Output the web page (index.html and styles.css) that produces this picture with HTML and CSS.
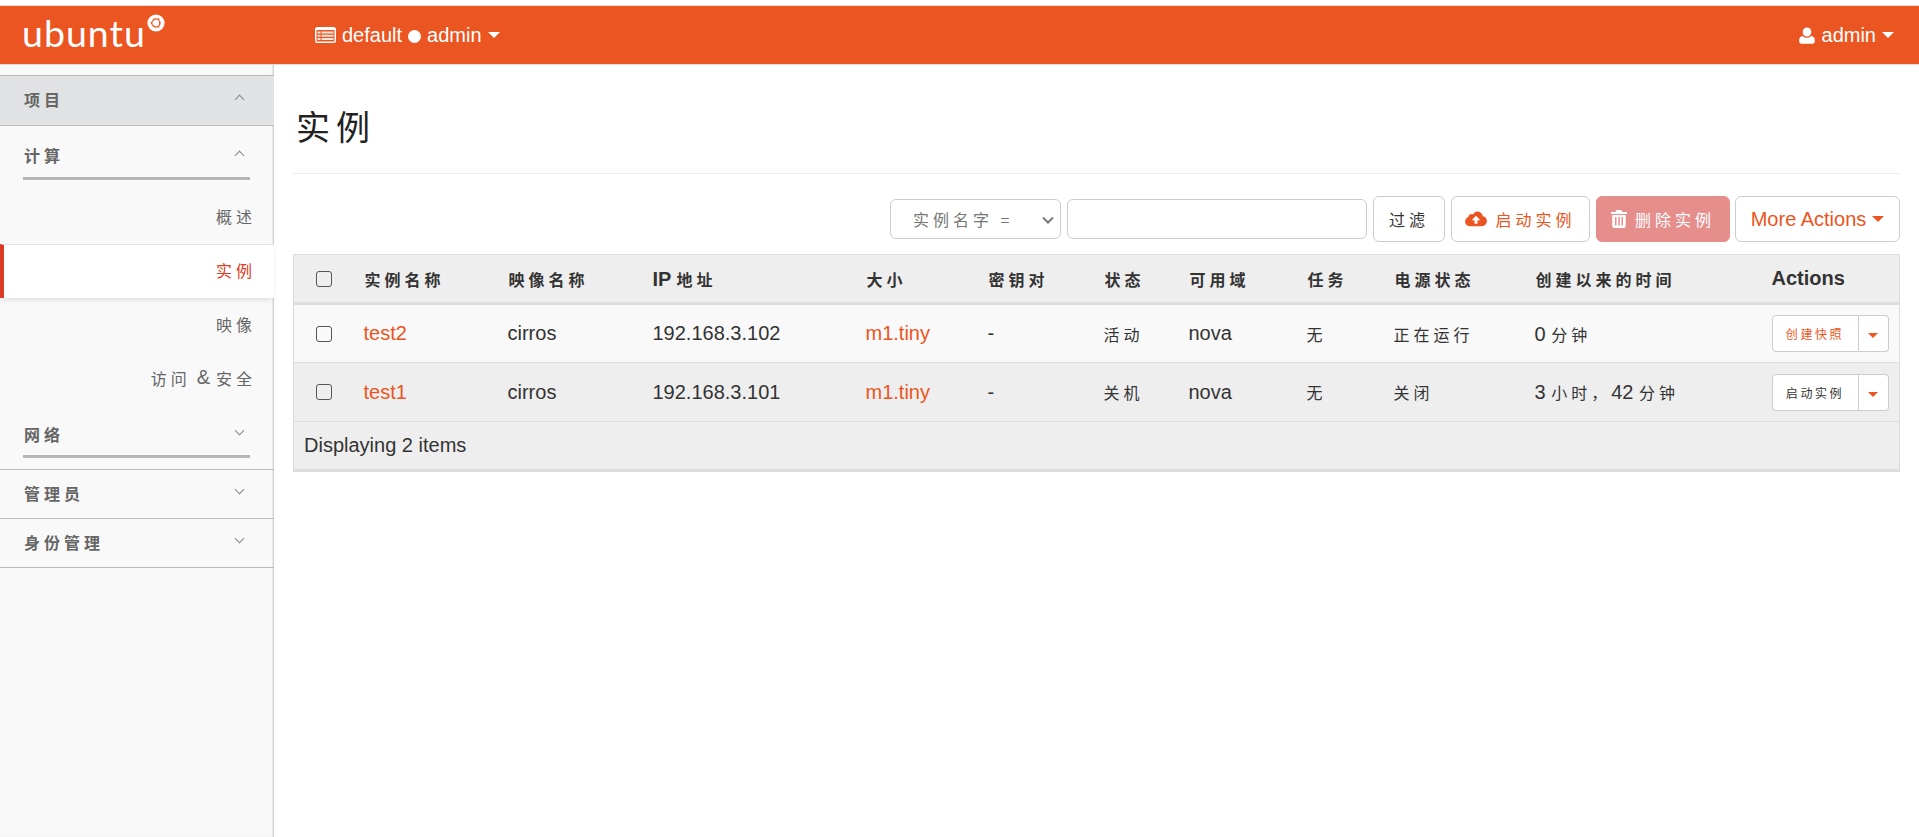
FILE: index.html
```html
<!DOCTYPE html>
<html lang="zh">
<head>
<meta charset="utf-8">
<title>实例</title>
<link rel="stylesheet" href="styles.css">
</head>
<body>
<header class="navbar">
  <a class="brand"><span class="brand-word">ubuntu</span><svg class="brand-mark" viewBox="0 0 18 18" width="18" height="18"><circle cx="9" cy="9" r="8.6" fill="#fff"/><circle cx="9" cy="9" r="3.9" fill="none" stroke="#eb5521" stroke-width="1.5"/><circle cx="4.7" cy="9" r="1.4" fill="#eb5521" stroke="#fff" stroke-width=".6"/><circle cx="11.2" cy="5.3" r="1.4" fill="#eb5521" stroke="#fff" stroke-width=".6"/><circle cx="11.2" cy="12.7" r="1.4" fill="#eb5521" stroke="#fff" stroke-width=".6"/></svg></a>
  <div class="nav-project">
    <svg class="nav-icon" viewBox="0 0 21 16" width="21" height="16"><rect width="21" height="16" rx="2.5" fill="#fff"/><rect x="1.5" y="3" width="18" height="11.5" fill="#eb5521"/><path d="M2.5 4.5h3v2h-3zM6.5 4.5h12v2h-12zM2.5 7.7h3v2h-3zM6.5 7.7h12v2h-12zM2.5 10.9h3v2h-3zM6.5 10.9h12v2h-12z" fill="#fff" opacity=".85"/></svg>
    <span>default</span><span class="nav-dot"></span><span>admin</span><span class="caret caret-white"></span>
  </div>
  <div class="nav-user">
    <svg class="nav-icon" viewBox="0 0 16 17" width="16" height="17"><path d="M8 .5a4.3 4.3 0 0 1 4.3 4.6A4.3 4.3 0 0 1 8 9.6a4.3 4.3 0 0 1-4.3-4.5A4.3 4.3 0 0 1 8 .5zM3.600 8.900C4.700 10 6.200 10.700 8 10.700s3.300-.7 4.400-1.800c2.300.3 3.500 2.100 3.500 5.100 0 1.700-1.100 2.800-2.700 2.800H2.800C1.200 16.800.1 15.700.1 14c0-3 1.200-4.800 3.500-5.100z" fill="#fff"/></svg>
    <span>admin</span><span class="caret caret-white"></span>
  </div>
</header>

<div class="shell">
  <nav class="sidebar">
    <div class="dash-head"><span class="zh">项目</span><span class="chev chev-up"></span></div>

    <div class="group">
      <div class="group-head"><span class="zh">计算</span><span class="chev chev-up"></span></div>
      <div class="group-rule"></div>
      <ul class="items">
        <li class="item"><span class="zh">概述</span></li>
        <li class="item item-active"><span class="zh">实例</span></li>
        <li class="item"><span class="zh">映像</span></li>
        <li class="item"><span class="zh">访问</span> &amp; <span class="zh">安全</span></li>
      </ul>
    </div>

    <div class="group group-last">
      <div class="group-head"><span class="zh">网络</span><span class="chev chev-down"></span></div>
      <div class="group-rule"></div>
    </div>

    <div class="dash-row"><span class="zh">管理员</span><span class="chev chev-down"></span></div>
    <div class="dash-row"><span class="zh">身份管理</span><span class="chev chev-down"></span></div>
  </nav>

  <main class="content">
    <div class="page-header"><h1 class="title">实例</h1></div>

    <form class="toolbar">
      <div class="select-wrap">
        <select class="filter-select"><option>实例名字 =</option></select>
        <svg class="select-chev" viewBox="0 0 12 8" width="12" height="8"><path d="M1 1.500l5 5 5-5" fill="none" stroke="#777" stroke-width="2"/></svg>
      </div>
      <input class="filter-input" type="text">
      <button type="button" class="btn btn-filter"><span class="zh">过滤</span></button>
      <button type="button" class="btn btn-link">
        <svg class="btn-icon" viewBox="0 0 22 16" width="22" height="16"><path fill-rule="evenodd" d="M12 .5c3 0 5.300 2 5.900 4.800 2.300.4 4 2.300 4 4.700 0 2.800-2.200 5.200-5 5.200H4.800C2.200 15.200.1 13.100.1 10.500c0-2.100 1.300-3.800 3.200-4.500C3.500 4.300 5 3 6.800 3c.6 0 1.100.1 1.500.4C9.100 1.600 10.400.5 12 .5zM11 4.800L6.700 9.200h2.800v3.600h3V9.200h2.800z" fill="#eb5521"/></svg>
        <span class="zh">启动实例</span>
      </button>
      <button type="button" class="btn btn-danger">
        <svg class="btn-icon" viewBox="0 0 16 18" width="16" height="18"><path fill-rule="evenodd" d="M5.500 0h5l1 2H15.500a.5.5 0 0 1 .5.5V4H0V2.500A.5.5 0 0 1 .5 2H4.500zM1.300 5h13.400v11a2 2 0 0 1-2 2H3.300a2 2 0 0 1-2-2zM4 7v8.500h1.500V7zM7.250 7v8.500h1.500V7zM10.500 7v8.500H12V7z" fill="#fff"/></svg>
        <span class="zh">删除实例</span>
      </button>
      <button type="button" class="btn btn-more">More Actions<span class="caret caret-orange"></span></button>
    </form>

    <table class="grid">
      <colgroup>
        <col class="c-check"><col class="c-name"><col class="c-image"><col class="c-ip"><col class="c-size"><col class="c-key"><col class="c-status"><col class="c-az"><col class="c-task"><col class="c-power"><col class="c-time"><col class="c-actions">
      </colgroup>
      <thead>
        <tr>
          <th class="cell-check"><input class="check" type="checkbox"></th>
          <th><span class="zh">实例名称</span></th>
          <th><span class="zh">映像名称</span></th>
          <th class="th-latin">IP <span class="zh">地址</span></th>
          <th><span class="zh">大小</span></th>
          <th><span class="zh">密钥对</span></th>
          <th><span class="zh">状态</span></th>
          <th><span class="zh">可用域</span></th>
          <th><span class="zh">任务</span></th>
          <th><span class="zh">电源状态</span></th>
          <th><span class="zh">创建以来的时间</span></th>
          <th class="th-latin">Actions</th>
        </tr>
      </thead>
      <tbody>
        <tr class="row-odd">
          <td class="cell-check"><input class="check" type="checkbox"></td>
          <td><a class="link">test2</a></td>
          <td>cirros</td>
          <td>192.168.3.102</td>
          <td><a class="link">m1.tiny</a></td>
          <td>-</td>
          <td><span class="zh">活动</span></td>
          <td>nova</td>
          <td><span class="zh">无</span></td>
          <td><span class="zh">正在运行</span></td>
          <td>0 <span class="zh">分钟</span></td>
          <td><div class="split"><button type="button" class="split-main split-accent"><span class="zh-small">创建快照</span></button><button type="button" class="split-toggle"><span class="caret caret-orange caret-small"></span></button></div></td>
        </tr>
        <tr class="row-even">
          <td class="cell-check"><input class="check" type="checkbox"></td>
          <td><a class="link">test1</a></td>
          <td>cirros</td>
          <td>192.168.3.101</td>
          <td><a class="link">m1.tiny</a></td>
          <td>-</td>
          <td><span class="zh">关机</span></td>
          <td>nova</td>
          <td><span class="zh">无</span></td>
          <td><span class="zh">关闭</span></td>
          <td>3 <span class="zh">小时，</span>42 <span class="zh">分钟</span></td>
          <td><div class="split"><button type="button" class="split-main"><span class="zh-small">启动实例</span></button><button type="button" class="split-toggle"><span class="caret caret-orange caret-small"></span></button></div></td>
        </tr>
      </tbody>
      <tfoot>
        <tr><td colspan="12" class="foot">Displaying 2 items</td></tr>
      </tfoot>
    </table>
  </main>
</div>
</body>
</html>
```
FILE: styles.css
```css
* { box-sizing: border-box; }
html, body { height: 100%; }
body {
  margin: 0;
  padding-top: 5px;
  overflow: hidden;
  background: #fff;
  color: #333;
  font-family: "Liberation Sans", "Noto Sans CJK SC", sans-serif;
  font-size: 20px;
}
ul { list-style: none; margin: 0; padding: 0; }

.zh {
  font-family: "Noto Sans CJK SC", sans-serif;
  font-size: 16px;
  letter-spacing: 4px;
}
.zh-small {
  font-family: "Noto Sans CJK SC", sans-serif;
  font-size: 12px;
  letter-spacing: 2.6px;
}

/* Top bar */
.navbar {
  height: 60px;
  display: flex;
  align-items: center;
  background: #eb5521;
  border-top: 1px solid #ddd;
  border-bottom: 1px solid #ddd;
  color: #fff;
  font-size: 20px;
}
.brand {
  width: 315px;
  padding-left: 22px;
  display: flex;
  align-items: flex-start;
  margin-top: -5px;
}
.brand-word {
  font-family: Lato, "Open Sans", sans-serif;
  font-weight: 400;
  font-size: 37.5px;
  line-height: 40px;
  letter-spacing: 1px;
}
.brand-mark { margin: 1px 0 0 1px; }
.nav-project, .nav-user { display: flex; align-items: center; }
.nav-project svg { margin-right: 6px; }
.nav-dot {
  width: 13px;
  height: 13px;
  margin: 2px 6px 0;
  border-radius: 50%;
  background: #fff;
}
.nav-user { margin-left: auto; padding-right: 25px; }
.nav-user svg { margin-right: 7px; }

.caret {
  display: inline-block;
  width: 0;
  height: 0;
  margin-left: 6px;
  border-left: 6px solid transparent;
  border-right: 6px solid transparent;
  border-top: 6px solid currentColor;
}
.caret-white { color: #fff; }
.caret-orange { color: #eb5521; }
.caret-small { margin-left: 0; border-left-width: 5px; border-right-width: 5px; border-top-width: 5px; }

/* Page shell */
.shell { display: flex; height: 772px; }

/* Sidebar */
.sidebar {
  flex: 0 0 274px;
  position: relative;
  padding-top: 10px;
  background: #f9f9f9;
  box-shadow: inset -2px 0 2px -1px #c4c4c4;
  color: #666;
}
.sidebar .zh { font-weight: 700; }
.chev {
  width: 7px;
  height: 7px;
  margin-right: 7px;
  border-left: 1.2px solid #888;
  border-top: 1.2px solid #888;
}
.chev-up { transform: rotate(45deg); margin-top: 1px; }
.chev-down { transform: rotate(225deg); margin-top: -7px; }

.dash-head {
  height: 51px;
  padding: 0 24px 3px;
  display: flex;
  align-items: center;
  justify-content: space-between;
  background: #e1e2e4;
  border-top: 1px solid #bbb;
  border-bottom: 1px solid #bbb;
}
.group-head {
  height: 42px;
  margin-top: 9px;
  padding: 0 24px 2px;
  display: flex;
  align-items: center;
  justify-content: space-between;
}
.group-rule {
  height: 3px;
  margin: 0 24px 0 23px;
  background: #b5b5b5;
}
.items { padding-top: 10px; }
.item {
  height: 54px;
  display: flex;
  align-items: center;
  justify-content: flex-end;
  padding: 0 18px 3px 0;
  color: #666;
  font-size: 20px;
  gap: 6px;
}
.item .zh { font-weight: 400; }
.item-active {
  position: relative;
  background: #fff;
  color: #dc3b24;
  border-top: 1px solid #e4e4e4;
  border-left: 4px solid #dc3b24;
  box-shadow: 0 3px 6px -2px rgba(0, 0, 0, .15);
}
.group-last { padding-bottom: 11px; border-bottom: 1px solid #bbb; }
.group-last .group-head { margin-top: 6px; height: 43px; padding-bottom: 0; }
.dash-row {
  height: 49px;
  padding: 0 24px 3px;
  display: flex;
  align-items: center;
  justify-content: space-between;
  border-bottom: 1px solid #bbb;
}

/* Main */
.content { flex: 1; padding: 0 19px; min-width: 0; }
.page-header {
  height: 109px;
  display: flex;
  align-items: center;
  border-bottom: 1px solid #eee;
  padding: 13px 0 0 3px;
}
.title {
  margin: 0;
  font-family: "Noto Sans CJK SC", sans-serif;
  font-size: 34px;
  font-weight: 400;
  letter-spacing: 6px;
  color: #222;
}
.toolbar {
  margin-top: 22px;
  height: 46px;
  display: flex;
  justify-content: flex-end;
  align-items: flex-start;
  gap: 6px;
}
.select-wrap { position: relative; width: 171px; margin-top: 3px; }
.filter-select {
  width: 100%;
  height: 40px;
  padding-left: 22px;
  appearance: none;
  background: #fff;
  border: 1px solid #ccc;
  border-radius: 6px;
  color: #777;
  font-family: "Noto Sans CJK SC", sans-serif;
  font-size: 16px;
  letter-spacing: 4px;
}
.select-chev { position: absolute; right: 7px; top: 17px; pointer-events: none; }
.filter-input {
  width: 300px;
  height: 40px;
  margin-top: 3px;
  border: 1px solid #ccc;
  border-radius: 6px;
  background: #fff;
}
.btn {
  height: 46px;
  padding: 0;
  display: flex;
  align-items: center;
  justify-content: center;
  gap: 8px;
  background: #fff;
  border: 1px solid #ccc;
  border-radius: 6px;
  font-family: inherit;
  font-size: 20px;
  color: #333;
}
.btn-filter { width: 72px; }
.btn-link { width: 139px; color: #eb5521; }
.btn-danger { width: 134px; margin-right: -1px; background: #e58e8c; border-color: #e58e8c; color: #fff; }
.btn-more { width: 165px; gap: 0; color: #eb5521; }

/* Table */
.grid {
  width: 100%;
  margin-top: 12px;
  table-layout: fixed;
  border-collapse: collapse;
  border: 1px solid #ddd;
  border-bottom: 3px solid #ddd;
  background: #eee;
}
.c-check { width: 62px; }
.c-name { width: 144px; }
.c-image { width: 145px; }
.c-ip { width: 213px; }
.c-size { width: 122px; }
.c-key { width: 116px; }
.c-status { width: 85px; }
.c-az { width: 118px; }
.c-task { width: 87px; }
.c-power { width: 141px; }
.c-time { width: 237px; }
th, td { padding: 0 8px; text-align: left; white-space: nowrap; }
th { height: 49px; font-weight: 700; border-bottom: 3px solid #ddd; }
th .zh { font-weight: 700; }
th:not(.cell-check) { padding-left: 9px; }
th.th-latin { padding-left: 8px; }
td { height: 59px; border-bottom: 1px solid #ddd; }
.row-odd { background: #f9f9f9; }
.row-even { background: #eee; }
.foot { height: 49px; padding-left: 10px; border-bottom: 0; }
.cell-check { padding: 0 0 0 22px; }
.check {
  display: block;
  width: 16px;
  height: 16px;
  margin: 0;
  appearance: none;
  background: transparent;
  border: 1.5px solid #555;
  border-radius: 3px;
}
.link { color: #eb5521; text-decoration: none; }

.split { display: flex; width: 117px; height: 37px; }
.split-main {
  width: 87px;
  padding: 0;
  background: #fff;
  border: 1px solid #ccc;
  border-radius: 4px 0 0 4px;
  color: #333;
}
.split-accent { color: #eb5521; }
.split-toggle {
  width: 30px;
  padding: 0;
  background: #fff;
  border: 1px solid #ccc;
  border-left: 0;
  border-radius: 0 4px 4px 0;
}
```
